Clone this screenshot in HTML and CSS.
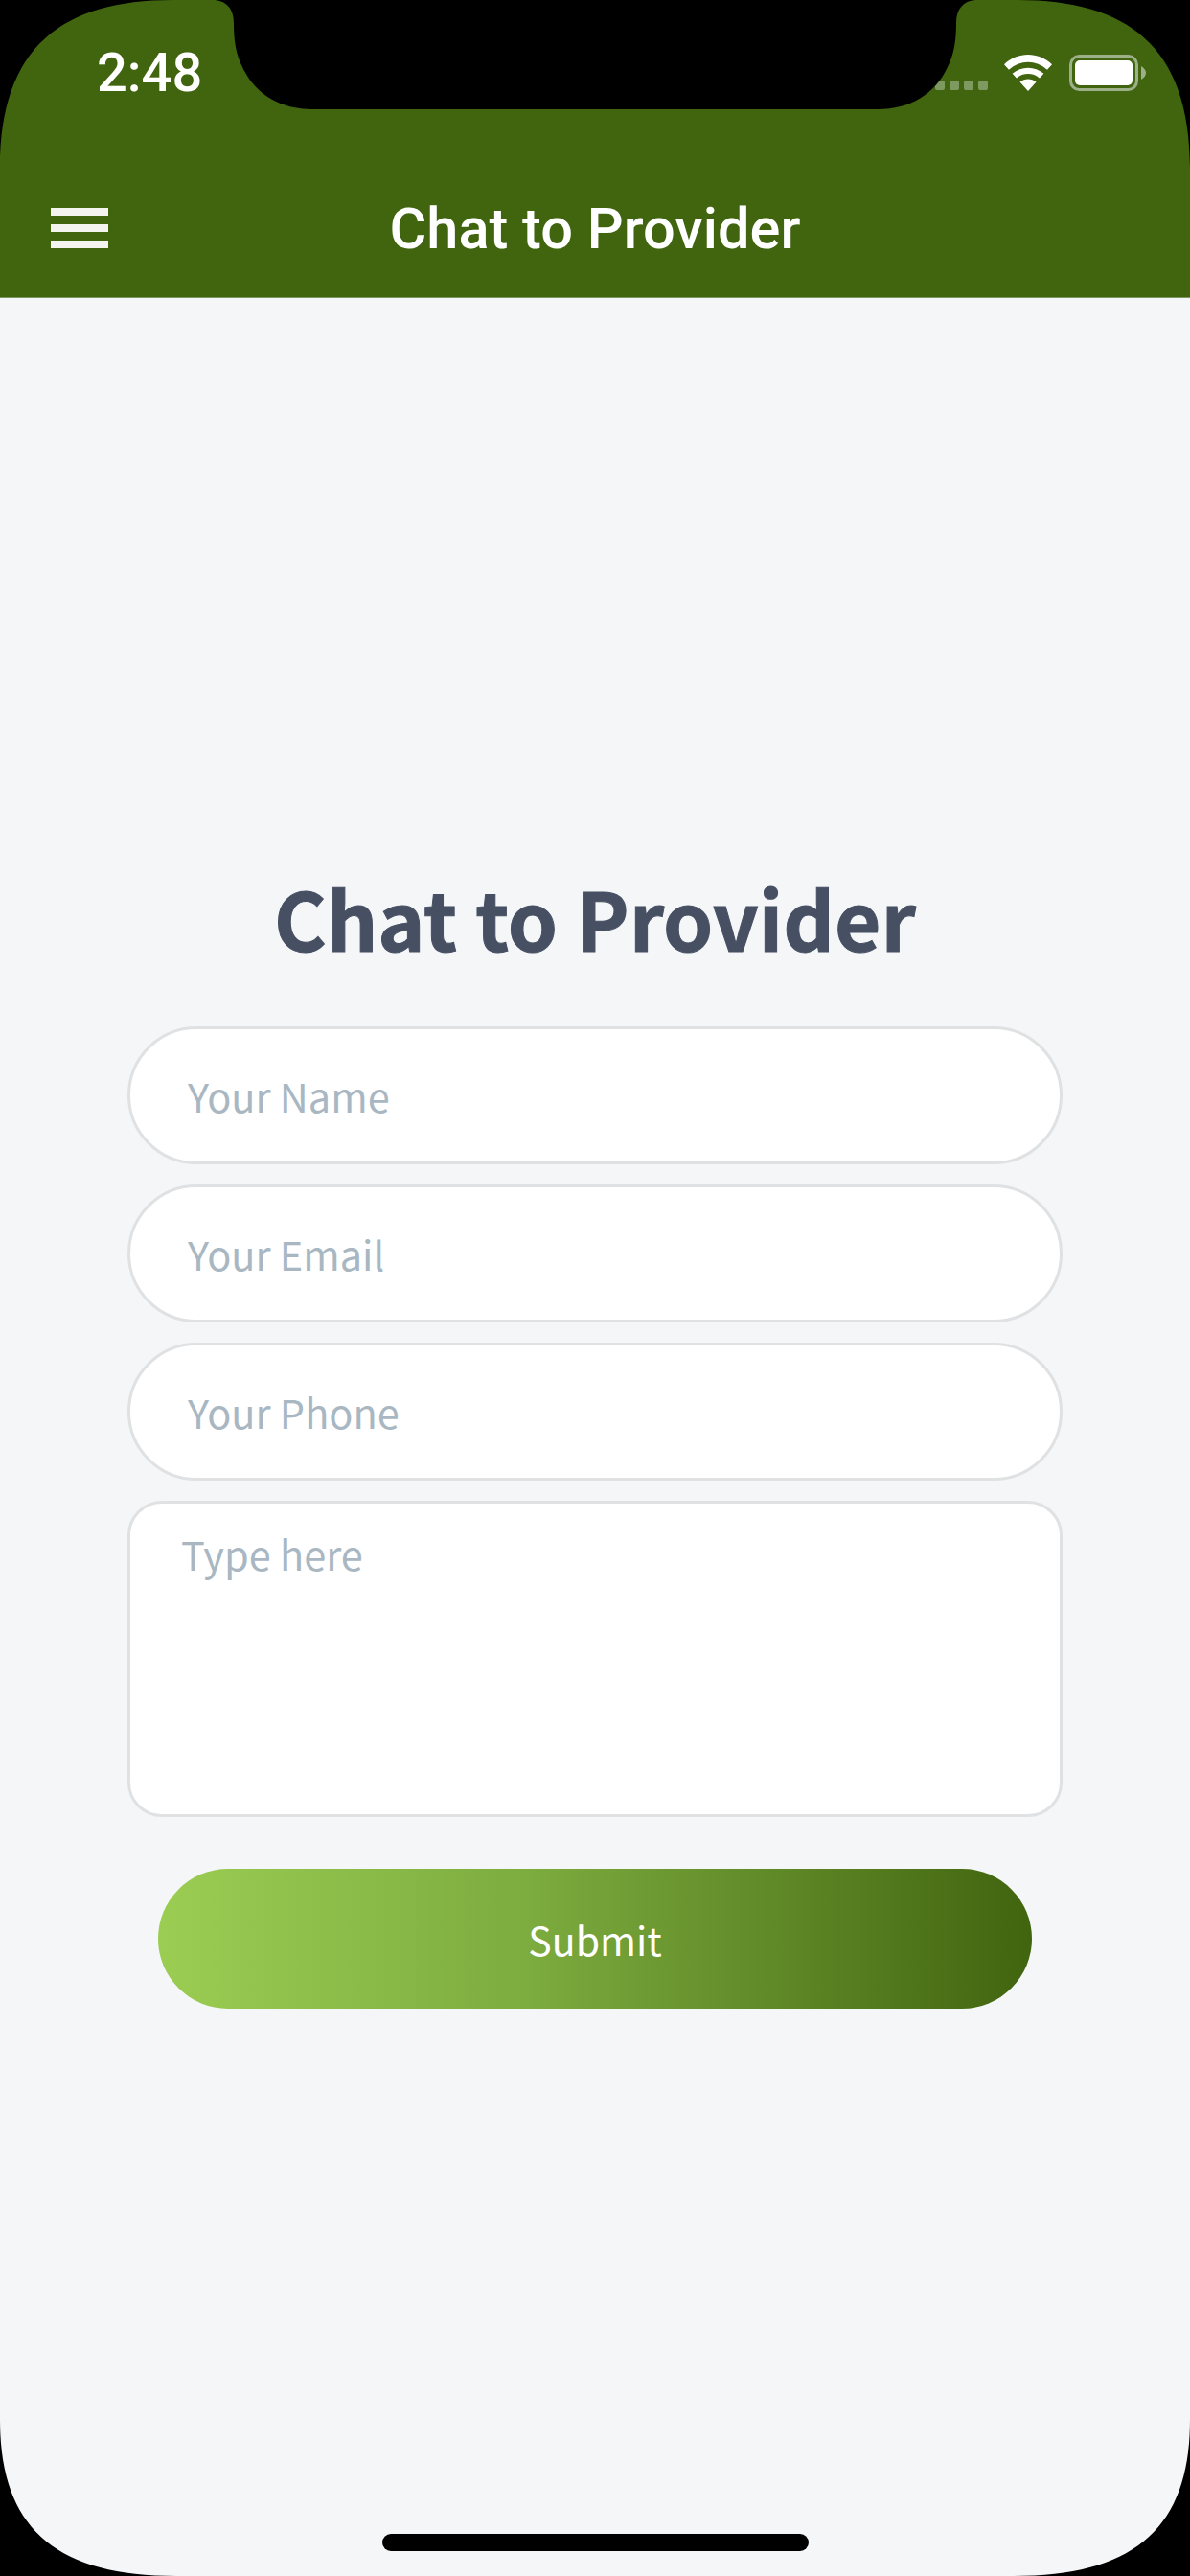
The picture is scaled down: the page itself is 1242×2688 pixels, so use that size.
FILE: index.html
```html
<!DOCTYPE html>
<html lang="en">
<head>
<meta charset="utf-8">
<title>Chat to Provider</title>
<link rel="stylesheet" href="styles.css">
</head>
<body>
<div class="screen">
  <header class="app-header">
    <div class="status-bar">
      <span class="clock">2:48</span>
      <div class="status-icons">
        <div class="signal"><i></i><i></i><i></i><i></i></div>
        <svg class="wifi" viewBox="0 0 50 38" aria-hidden="true">
          <path d="M25 38 L16.5 28.5 C21.5 24.5 28.5 24.5 33.5 28.5 Z"/>
          <path d="M13 24.5 L8.6 19.7 C18 11.6 32 11.6 41.4 19.7 L37 24.5 C30 18.6 20 18.6 13 24.5 Z"/>
          <path d="M5 15.8 L0 10.3 C14 -3.4 36 -3.4 50 10.3 L45 15.8 C33.5 5 16.5 5 5 15.8 Z"/>
        </svg>
        <svg class="battery" viewBox="0 0 80 38" aria-hidden="true">
          <rect class="battery-shell" x="1.5" y="1.5" width="69" height="35" rx="9"/>
          <rect class="battery-level" x="6" y="6" width="60" height="26" rx="5"/>
          <path class="battery-nub" d="M75 12 C78 14 80 16 80 19 C80 22 78 24 75 26 Z"/>
        </svg>
      </div>
    </div>
    <nav class="nav-bar">
      <button class="menu-button" type="button" aria-label="Menu"><i></i><i></i><i></i></button>
      <h1 class="nav-title">Chat to Provider</h1>
    </nav>
  </header>

  <main class="content">
    <h2 class="form-title">Chat to Provider</h2>
    <form class="form">
      <div class="field"><span class="hint">Your Name</span></div>
      <div class="field"><span class="hint">Your Email</span></div>
      <div class="field"><span class="hint">Your Phone</span></div>
      <div class="field-area"><span class="hint">Type here</span></div>
      <button class="submit" type="button">Submit</button>
    </form>
  </main>

  <div class="home-strip"><span class="home-indicator"></span></div>

  <!-- Device outline: rounded display corners and the sensor housing -->
  <svg class="bezel" viewBox="0 0 1242 2688" aria-hidden="true">
    <path fill-rule="evenodd" d="M0 0H1242V2688H0Z M0 175 C0 48 66 0 180 0 H222 C236 0 244 9 244 24 C244 42 246 56 253 70 C266 98 292 114 326 114 H916 C950 114 976 98 989 70 C996 56 998 42 998 24 C998 9 1006 0 1020 0 H1062 C1176 0 1242 48 1242 175 V2525 C1242 2636 1186 2688 1058 2688 H184 C56 2688 0 2636 0 2525 Z"/>
  </svg>
</div>
</body>
</html>
```
FILE: styles.css
```css
* {
  box-sizing: border-box;
}

html,
body {
  margin: 0;
  padding: 0;
  background: #000;
}

.screen {
  position: relative;
  display: flex;
  flex-direction: column;
  width: 1242px;
  height: 2688px;
  overflow: hidden;
  background: #f4f6f8;
}

/* Header */
.app-header {
  flex: none;
  height: 311px;
  background: #41640f;
  border-bottom: 1px solid #7d9760;
  color: #fff;
}

.status-bar {
  display: flex;
  align-items: flex-start;
  justify-content: space-between;
  height: 200px;
  padding: 57px 46px 0 101px;
}

.clock {
  font: 500 56px/38px Roboto, sans-serif;
}

.status-icons {
  display: flex;
  align-items: flex-start;
}

.signal {
  display: flex;
  gap: 5px;
  margin: 27px 17px 0 0;
}

.signal i {
  width: 10px;
  height: 10px;
  border-radius: 2px;
  background: #7f9a60;
}

.wifi {
  width: 50px;
  height: 38px;
  fill: #fff;
}

.battery {
  width: 80px;
  height: 38px;
  margin-left: 18px;
}

.battery-shell {
  fill: none;
  stroke: #9db08a;
  stroke-width: 3;
}

.battery-level {
  fill: #fff;
}

.battery-nub {
  fill: #9db08a;
}

.nav-bar {
  position: relative;
  display: flex;
  justify-content: center;
  align-items: flex-start;
}

.menu-button {
  position: absolute;
  left: 53px;
  top: 17px;
  display: flex;
  flex-direction: column;
  gap: 9px;
  width: 60px;
  padding: 0;
  border: 0;
  background: none;
}

.menu-button i {
  width: 60px;
  height: 8px;
  background: #f4f5ef;
}

.nav-title {
  margin: 0;
  font: 500 59.5px/78px Roboto, sans-serif;
}

/* Form */
.content {
  flex: 1;
  display: flex;
  flex-direction: column;
  align-items: center;
  padding-top: 584px;
}

.form-title {
  margin: 0 0 52px;
  color: #475063;
  font: 700 83.5px/124px "Noto Sans CJK SC", sans-serif;
  -webkit-text-stroke: 1px #475063;
}

.form {
  display: flex;
  flex-direction: column;
  align-items: center;
  width: 976px;
}

.field,
.field-area {
  width: 100%;
  background: #fff;
  border: 3px solid #dfe1e3;
}

.field {
  display: flex;
  align-items: center;
  height: 144px;
  margin-bottom: 21px;
  padding-left: 60px;
  border-radius: 72px;
}

.field-area {
  height: 330px;
  padding: 22px 0 0 53px;
  border-radius: 36px;
}

.hint {
  color: #a9b7c2;
  font: 400 41.5px/60px "Noto Sans CJK SC", sans-serif;
}

.submit {
  width: 912px;
  height: 146px;
  margin-top: 54px;
  border: 0;
  border-radius: 73px;
  background: linear-gradient(90deg, #9bcd53 0%, #7dac3f 42%, #41640f 100%);
  color: #fff;
  font: 400 41px/60px "Noto Sans CJK SC", sans-serif;
}

/* Home indicator */
.home-strip {
  flex: none;
  display: flex;
  justify-content: center;
  height: 44px;
}

.home-indicator {
  width: 445px;
  height: 18px;
  border-radius: 9px;
  background: #000;
}

.bezel {
  position: absolute;
  inset: 0;
  width: 1242px;
  height: 2688px;
  fill: #000;
  pointer-events: none;
}
```
